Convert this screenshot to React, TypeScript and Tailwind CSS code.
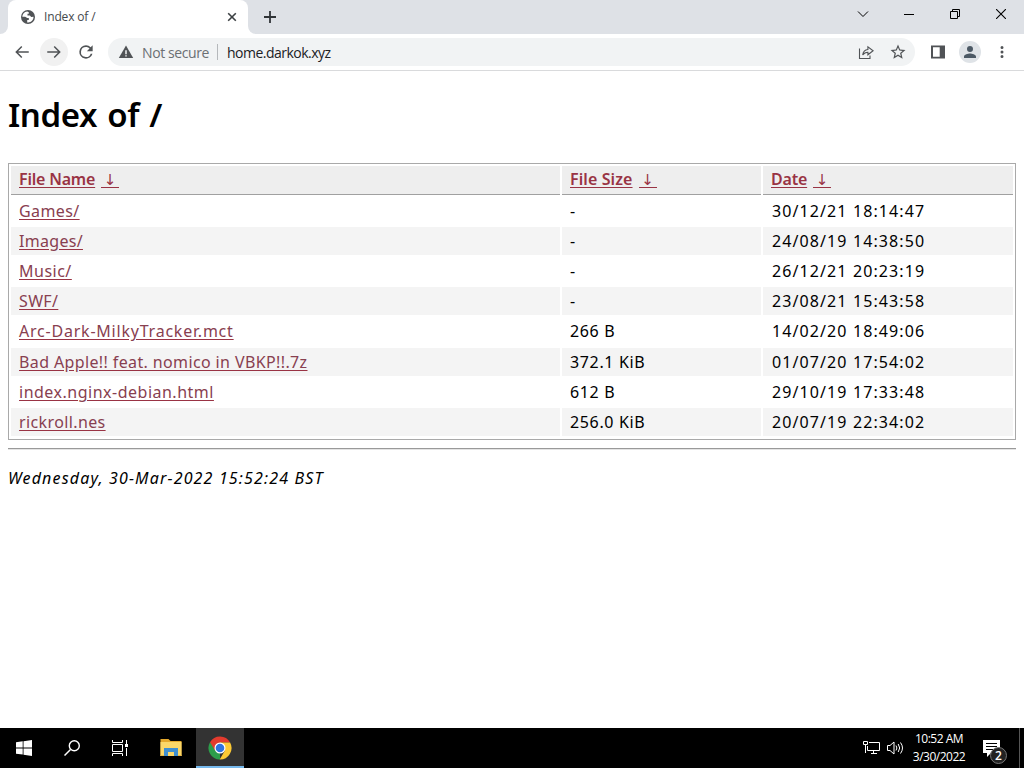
import type { ReactNode } from "react";

const files = [
    { name: "Games/", size: "-", date: "30/12/21 18:14:47", track: "tracking-[0.4px]" },
    { name: "Images/", size: "-", date: "24/08/19 14:38:50", track: "tracking-[0.3px]" },
    { name: "Music/", size: "-", date: "26/12/21 20:23:19", track: "tracking-[0.5px]" },
    { name: "SWF/", size: "-", date: "23/08/21 15:43:58", track: "tracking-[0.35px]" },
    { name: "Arc-Dark-MilkyTracker.mct", size: "266 B", date: "14/02/20 18:49:06", track: "tracking-[0.78px]" },
    { name: "Bad Apple!! feat. nomico in VBKP!!.7z", size: "372.1 KiB", date: "01/07/20 17:54:02", track: "tracking-[0.38px]" },
    { name: "index.nginx-debian.html", size: "612 B", date: "29/10/19 17:33:48", track: "tracking-[0.5px]" },
    { name: "rickroll.nes", size: "256.0 KiB", date: "20/07/19 22:34:02", track: "tracking-[0.38px]" },
];

const columns = [
    { label: "File Name", width: "w-[549px]", track: "tracking-[-0.2px]" },
    { label: "File Size", width: "w-[199px]", track: "tracking-[0.1px]" },
    { label: "Date", width: "w-[250px]", track: "tracking-[-0.2px]" },
];

function Icon({ children, size = 18, box = "0 0 24 24" }: { children: ReactNode; size?: number; box?: string }) {
    return (
        <svg width={size} height={size} viewBox={box} fill="currentColor" className="block shrink-0">
            {children}
        </svg>
    );
}

function TabStrip() {
    return (
        <div className="flex h-[34px] bg-[#dee1e6]">
            <div className="flex h-full w-2 bg-white">
                <div className="w-full rounded-br-lg bg-[#dee1e6]" />
            </div>
            <div className="flex h-full w-[240px] items-center rounded-t-lg bg-white pl-3 pr-[11px]">
                <Icon size={16} box="0 0 16 16">
                    <circle cx="8" cy="8" r="7" fill="#505356" />
                    <path fill="#fff" d="M7.2 2.4C4.3 2.8 2.3 5 2.3 7.7h2.9l2 1.2h1.6v2H7.2v2.5c3.5.6 6.4-2.1 6.3-5.6l-2.300.1-1.300-1.500H7.500V4.700h1.300V3.200z" />
                </Icon>
                <span className="ml-2 grow text-[12px] leading-4 tracking-[-0.15px] text-[#45494d]">Index of /</span>
                <Icon size={10} box="0 0 10 10">
                    <path d="M1.2 1.2l7.6 7.6M8.8 1.2L1.2 8.8" stroke="#3c4043" strokeWidth="1.6" />
                </Icon>
            </div>
            <div className="flex h-full w-2 bg-white">
                <div className="w-full rounded-bl-lg bg-[#dee1e6]" />
            </div>
            <div className="flex grow items-center pl-2">
                <Icon size={12} box="0 0 12 12">
                    <path d="M6 0v12M0 6h12" stroke="#303438" strokeWidth="1.8" />
                </Icon>
            </div>
            <div className="flex h-7 text-black">
                <div className="grid w-[46px] place-items-center">
                    <Icon size={12} box="0 0 12 12">
                        <path d="M1 3.5l5 5 5-5" fill="none" stroke="currentColor" />
                    </Icon>
                </div>
                <div className="grid w-[46px] place-items-center">
                    <div className="h-px w-[10px] bg-black" />
                </div>
                <div className="grid w-[46px] place-items-center">
                    <Icon size={10} box="0 0 10 10">
                        <path d="M.5 2.5h7v7h-7zM2.5 2.5v-2h7v7h-2" fill="none" stroke="currentColor" />
                    </Icon>
                </div>
                <div className="grid w-[46px] place-items-center">
                    <Icon size={10} box="0 0 10 10">
                        <path d="M0 0l10 10M10 0L0 10" stroke="currentColor" strokeWidth="1.1" />
                    </Icon>
                </div>
            </div>
        </div>
    );
}

function Toolbar() {
    return (
        <div className="flex h-[37px] items-center border-b border-[#d9dadc] bg-white text-[#505356]">
            <div className="flex items-center pl-2">
                <div className="grid size-7 place-items-center">
                    <Icon><path d="M21 11H6.83l5.58-5.59L11 4l-8 8 8 8 1.41-1.41L6.83 13H21z" /></Icon>
                </div>
                <div className="ml-1 grid size-7 place-items-center rounded-full bg-[#f1f1f1]">
                    <Icon><path d="M3 11h14.17l-5.58-5.59L13 4l8 8-8 8-1.41-1.41L17.17 13H3z" /></Icon>
                </div>
                <div className="ml-1 grid size-7 place-items-center">
                    <Icon size={20}>
                        <path d="M17.65 6.35A7.96 7.96 0 0 0 12 4a8 8 0 1 0 7.73 10h-2.08A6 6 0 1 1 12 6c1.66 0 3.14.69 4.22 1.78L13 11h7V4z" />
                    </Icon>
                </div>
            </div>
            <div className="ml-2 flex h-7 w-[807px] items-center rounded-full bg-[#f1f3f4] pl-[10px]">
                <Icon size={16} box="0 0 16 16">
                    <path d="M8 1.6L15.2 14H.8z" />
                    <path d="M8 6.2v4M8 11.2v1.4" stroke="#f1f3f4" strokeWidth="1.5" />
                </Icon>
                <span className="ml-2 w-[67px] whitespace-nowrap text-[14px] tracking-[-0.4px] text-[#6b6f73]">Not secure</span>
                <div className="ml-2 h-4 w-px bg-[#b5b8bb]" />
                <span className="ml-[9px] grow text-[14px] tracking-[-0.52px] text-[#202124]">home.darkok.xyz</span>
                <Icon size={16} box="0 0 16 16">
                    <path d="M1.5 4.5v10H12v-3M4.7 11c.4-3.3 2-5.2 5.2-5.5V2.8l5.200 4-5.200 4V8.200C7.500 8.200 6 9 4.700 11z" fill="none" stroke="currentColor" strokeWidth="1.1" />
                </Icon>
                <div className="ml-[15px] mr-2">
                    <Icon><path d="M22 9.24l-7.19-.62L12 2 9.19 8.63 2 9.24l5.46 4.73L5.82 21 12 17.27 18.18 21l-1.63-7.03zM12 15.4l-3.76 2.27 1-4.28-3.32-2.88 4.38-.38L12 6.1l1.71 4.04 4.38.38-3.32 2.88 1 4.28z" /></Icon>
                </div>
            </div>
            <div className="ml-[15px]">
                <Icon size={16} box="0 0 16 16">
                    <path d="M1 1.5h14v13H1zM3 3.3v9.4h6.7V3.3z" fillRule="evenodd" />
                </Icon>
            </div>
            <div className="ml-[13px] grid size-[22px] place-items-center rounded-full bg-[#dfe3e7] text-[#4c5965]">
                <Icon><path d="M12 12a4 4 0 1 0 0-8 4 4 0 0 0 0 8zm0 2c-2.67 0-8 1.34-8 4v2h16v-2c0-2.66-5.33-4-8-4z" /></Icon>
            </div>
            <div className="ml-3">
                <Icon><path d="M12 8a2 2 0 1 0 0-4 2 2 0 0 0 0 4zm0 2a2 2 0 1 0 0 4 2 2 0 0 0 0-4zm0 6a2 2 0 1 0 0 4 2 2 0 0 0 0-4z" /></Icon>
            </div>
        </div>
    );
}

function Listing() {
    return (
        <div className="flex h-[277px] flex-col gap-[2px] border border-[#a9a9a9] p-[2px]">
            <div className="flex h-[28.8px] shrink-0 gap-[2px]">
                {columns.map((c) => (
                    <div key={c.label} className={`${c.width} border-b border-[#a0a0a0] bg-[#eee] pl-2 leading-[27px] text-[#993344]`}>
                        <a className={`font-semibold underline underline-offset-2 ${c.track}`}>{c.label}</a>
                        <a className="ml-[6px] inline-block w-[18px] text-center font-['DejaVu_Sans'] text-[15px] leading-[13px] shadow-[0_1px_0_#993344]">↓</a>
                    </div>
                ))}
            </div>
            {files.map((f, i) => (
                <div key={f.name} className="flex h-[28.15px] shrink-0 gap-[2px] leading-[28px]">
                    <div className={`w-[549px] pl-2 text-[#884050] ${i % 2 ? "bg-[#f4f4f4]" : ""}`}>
                        <a className={`underline decoration-[#993344] underline-offset-2 ${f.track}`}>{f.name}</a>
                    </div>
                    <div className={`w-[199px] pl-2 tracking-[0.65px] ${i % 2 ? "bg-[#f4f4f4]" : ""}`}>{f.size}</div>
                    <div className={`w-[250px] pl-[9px] tracking-[1.1px] ${i % 2 ? "bg-[#f4f4f4]" : ""}`}>{f.date}</div>
                </div>
            ))}
        </div>
    );
}

function Taskbar() {
    return (
        <div className="flex h-10 bg-black font-['Open_Sans',sans-serif] text-white">
            <div className="grid w-12 place-items-center">
                <Icon size={16} box="0 0 16 16">
                    <path d="M0 2.3L6.7 1.3v6.2H0zM7.5 1.2L16 0v7.5H7.5zM0 8.4h6.7v6.2L0 13.7zM7.5 8.4H16V16l-8.5-1.2z" />
                </Icon>
            </div>
            <div className="grid w-12 place-items-center">
                <Icon size={16} box="0 0 16 16">
                    <path d="M.5 15.5l6-6" stroke="currentColor" strokeWidth="1.5" />
                    <circle cx="10.3" cy="5.7" r="5" fill="none" stroke="currentColor" strokeWidth="1.4" />
                </Icon>
            </div>
            <div className="grid w-12 place-items-center">
                <Icon size={16} box="0 0 16 16">
                    <path d="M.5 0v2.5h10V0M.5 16v-2.5h10V16M.5 4.5h10v7H.5zM14.5 0v4M14.5 8v8" fill="none" stroke="currentColor" />
                    <path d="M13 4h3v3h-3z" />
                </Icon>
            </div>
            <div className="grid w-[52px] place-items-center pl-[2px]">
                <Icon size={22} box="0 0 22 22">
                    <path d="M.5 2h8l2 2h11v15H.5z" fill="#e5a92c" />
                    <path d="M.5 5h21v14H.5z" fill="#fbd768" />
                    <path d="M4 11h14v8h-4v-4H8v4H4z" fill="#3f8fd0" />
                    <path d="M.5 18h3.5v1H.5zM18 18h3.5v1H18z" fill="#e5b94a" />
                </Icon>
            </div>
            <div className="grid w-12 place-items-center border-b-2 border-[#76b9ed] bg-[#333] pt-px">
                <Icon size={24} box="0 0 24 24">
                    <path d="M12 12v11.5A11.5 11.5 0 0 1 2.04 6.25z" fill="#2d9d4b" />
                    <path d="M12 6.5h10.1a11.5 11.5 0 0 0-20.06-.25L7.2 14.8z" fill="#e33b2e" />
                    <path d="M16.8 14.8L11.7 23.5A11.5 11.5 0 0 0 22.1 6.5H12z" fill="#fcc934" />
                    <circle cx="12" cy="12" r="5.5" fill="#fff" />
                    <circle cx="12" cy="12" r="4.3" fill="#2f73e0" />
                </Icon>
            </div>
            <div className="flex grow items-center justify-end">
                <svg width="17" height="16" viewBox="0 0 17 16" fill="none" stroke="currentColor">
                    <path d="M6 2.5h10.5v8h-12V6M8 13.5h6M10.5 11v2M.5 1.5h4v3h-4zM2.5 5v8" />
                </svg>
                <svg width="17" height="16" viewBox="0 0 17 16" fill="none" stroke="currentColor" className="ml-[7px]">
                    <path d="M.5 5.5H3L7 2v12l-4-3.5H.5zM9 5.5q1.8 2.5 0 5M11.2 4q3 4 0 8M13.5 2.5q4 5.5 0 11" />
                </svg>
                <div className="ml-[6px] w-[58px] text-center text-[12px] leading-[18px] tracking-[-0.5px]">
                    <div>10:52 AM</div>
                    <div>3/30/2022</div>
                </div>
                <div className="relative ml-[15px] mr-[11px] h-[26px] w-[25px]">
                    <svg width="17" height="17" viewBox="0 0 17 17" className="mt-[5px]">
                        <path d="M0 0h17v13h-9l-4 4v-4H0z" fill="#fff" />
                        <path d="M3 3.5h11M3 6.5h11M3 9.5h7" stroke="#000" />
                    </svg>
                    <div className="absolute left-[7px] top-3 grid size-[17px] place-items-center rounded-full border border-[#777] bg-[#222] text-[12px] font-semibold leading-none">2</div>
                </div>
                <div className="h-full w-[5px] border-l border-[#555]" />
            </div>
        </div>
    );
}

export default function App() {
    return (
        <div className="flex h-screen w-[1024px] flex-col overflow-hidden bg-white font-['Open_Sans',sans-serif]">
            <TabStrip />
            <Toolbar />
            <div className="grow px-2 pt-[22px] font-['Noto_Sans',sans-serif] text-[16px] text-black">
                <h1 className="h-[70px] text-[33px] font-semibold leading-[44px] tracking-[-0.4px] [word-spacing:2px]">Index of /</h1>
                <Listing />
                <div className="mt-2 h-[2px] border-b border-t border-b-[#e4e4e4] border-t-[#999]" />
                <p className="mt-4 italic leading-6 tracking-[1.16px]">Wednesday, 30-Mar-2022 15:52:24 BST</p>
            </div>
            <Taskbar />
        </div>
    );
}
